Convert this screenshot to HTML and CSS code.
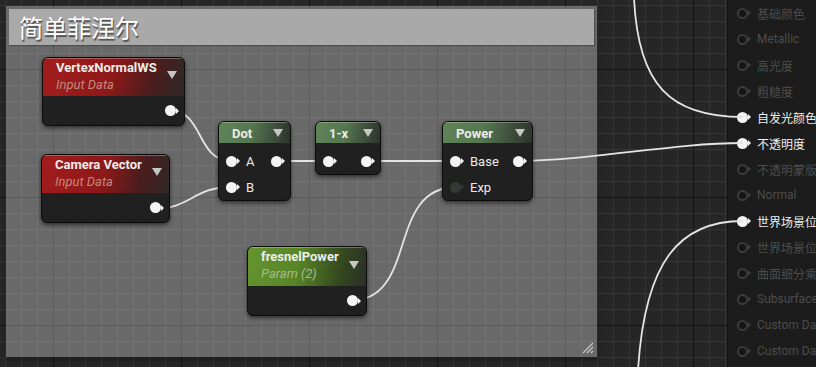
FILE: index.html
```html
<!DOCTYPE html>
<html lang="zh">
<head>
    <meta charset="UTF-8">
    <title>简单菲涅尔</title>
    <link rel="stylesheet" href="styles.css">
</head>
<body>

<div class="graph">

    <!-- comment box -->
    <div class="comment">
        <div class="comment-title">简单菲涅尔</div>
        <svg class="grip" width="12" height="12" viewBox="0 0 12 12">
            <path d="M1 11 L11 1 M5 11 L11 5 M9 11 L11 9" stroke="#c8c8c8" stroke-width="1.2"/>
        </svg>
    </div>

    <!-- material result node -->
    <div class="result">
        <div class="result-row"><span class="pin pin-off"></span><span>基础颜色</span></div>
        <div class="result-row"><span class="pin pin-off"></span><span>Metallic</span></div>
        <div class="result-row"><span class="pin pin-off"></span><span>高光度</span></div>
        <div class="result-row"><span class="pin pin-off"></span><span>粗糙度</span></div>
        <div class="result-row on"><span class="pin"></span><span>自发光颜色</span></div>
        <div class="result-row on"><span class="pin"></span><span>不透明度</span></div>
        <div class="result-row"><span class="pin pin-off"></span><span>不透明蒙版</span></div>
        <div class="result-row"><span class="pin pin-off"></span><span>Normal</span></div>
        <div class="result-row on"><span class="pin"></span><span>世界场景位置偏移</span></div>
        <div class="result-row"><span class="pin pin-off"></span><span>世界场景位移</span></div>
        <div class="result-row"><span class="pin pin-off"></span><span>曲面细分乘数</span></div>
        <div class="result-row"><span class="pin pin-off"></span><span>Subsurface Color</span></div>
        <div class="result-row"><span class="pin pin-off"></span><span>Custom Data 0</span></div>
        <div class="result-row"><span class="pin pin-off"></span><span>Custom Data 1</span></div>
    </div>

    <!-- wires -->
    <svg class="wires" width="816" height="367" viewBox="0 0 816 367">
        <g fill="none" stroke="#e4e4e4" stroke-width="1.8">
            <path d="M168 110 C 205 110, 195 161, 232 161"/>
            <path d="M152 209 C 192 209, 192 187, 232 187"/>
            <path d="M274 161 L 328 161"/>
            <path d="M364 161 L 457 161"/>
            <path d="M516 161 C 590 161, 670 143, 743 143"/>
            <path d="M349 301 C 420 301, 385 187, 457 187"/>
            <path d="M634 -2 C 638 85, 670 117, 743 117"/>
            <path d="M638 370 C 645 260, 680 221, 743 221"/>
        </g>
    </svg>

    <!-- nodes -->
    <div class="node n-vertex">
        <div class="node-head head-red tall">
            <div class="node-titles">
                <div class="node-title">VertexNormalWS</div>
                <div class="node-sub sub-red">Input Data</div>
            </div>
            <span class="caret"></span>
        </div>
        <div class="node-body single">
            <div class="pin-row"><span class="pin out"></span></div>
        </div>
    </div>

    <div class="node n-camera">
        <div class="node-head head-red tall">
            <div class="node-titles">
                <div class="node-title">Camera Vector</div>
                <div class="node-sub sub-red">Input Data</div>
            </div>
            <span class="caret"></span>
        </div>
        <div class="node-body single">
            <div class="pin-row"><span class="pin out"></span></div>
        </div>
    </div>

    <div class="node n-dot">
        <div class="node-head head-green">
            <div class="node-titles"><div class="node-title">Dot</div></div>
            <span class="caret"></span>
        </div>
        <div class="node-body">
            <div class="pin-row"><span class="pin"></span><span class="pin-label">A</span><span class="pin out"></span></div>
            <div class="pin-row"><span class="pin"></span><span class="pin-label">B</span></div>
        </div>
    </div>

    <div class="node n-oneminus">
        <div class="node-head head-green">
            <div class="node-titles"><div class="node-title">1-x</div></div>
            <span class="caret"></span>
        </div>
        <div class="node-body">
            <div class="pin-row"><span class="pin"></span><span class="pin out"></span></div>
        </div>
    </div>

    <div class="node n-power">
        <div class="node-head head-green">
            <div class="node-titles"><div class="node-title">Power</div></div>
            <span class="caret"></span>
        </div>
        <div class="node-body">
            <div class="pin-row"><span class="pin"></span><span class="pin-label">Base</span><span class="pin out"></span></div>
            <div class="pin-row"><span class="pin pin-dim"></span><span class="pin-label">Exp</span></div>
        </div>
    </div>

    <div class="node n-fresnel">
        <div class="node-head head-param tall">
            <div class="node-titles">
                <div class="node-title">fresnelPower</div>
                <div class="node-sub sub-green">Param (2)</div>
            </div>
            <span class="caret"></span>
        </div>
        <div class="node-body single">
            <div class="pin-row"><span class="pin out"></span></div>
        </div>
    </div>

</div>

</body>
</html>
```

FILE: styles.css
```css
body {
    margin: 0;
    background: #262626;
    font-family: Roboto, "Noto Sans CJK SC", sans-serif;
}
.graph {
    position: relative;
    width: 816px;
    height: 367px;
    overflow: hidden;
    background-color: #262626;
    background-image:
        linear-gradient(to right, #141414 1px, transparent 1px),
        linear-gradient(to bottom, #141414 1px, transparent 1px),
        linear-gradient(to right, #353535 1px, transparent 1px),
        linear-gradient(to bottom, #353535 1px, transparent 1px);
    background-size: 128px 128px, 128px 128px, 16px 16px, 16px 16px;
    background-position: 53px 69px, 53px 69px, 5px 5px, 5px 5px;
}

/* comment box */
.comment {
    position: absolute;
    left: 6px;
    top: 6px;
    width: 591px;
    height: 351px;
    padding: 3px;
    box-sizing: border-box;
    background: rgba(255, 255, 255, 0.31);
    box-shadow: 0 2px 4px rgba(0, 0, 0, 0.45);
}
.comment-title {
    height: 36px;
    padding-left: 10px;
    background: #a9a9a9;
    color: #ffffff;
    font-family: "Noto Sans CJK SC", sans-serif;
    font-size: 24px;
    line-height: 36px;
    text-shadow: 1px 2px 1px rgba(0, 0, 0, 0.55);
    box-shadow: 1px 1px 1px rgba(0, 0, 0, 0.25);
}
.grip {
    position: absolute;
    right: 3px;
    bottom: 3px;
}

/* result node */
.result {
    position: absolute;
    left: 727px;
    top: 0;
    width: 100px;
    height: 367px;
    background: #1b1c1b;
    border-left: 1px solid #141414;
    font-size: 12px;
    color: #4c4c4c;
}
.result-row {
    display: flex;
    align-items: center;
    gap: 6px;
    height: 26px;
    padding-left: 9px;
    white-space: nowrap;
}
.result-row.on {
    color: #eeeeee;
}
.result-row span:last-child {
    margin-left: 3px;
}

.wires {
    position: absolute;
    left: 0;
    top: 0;
}

/* pins */
.pin {
    position: relative;
    flex: none;
    width: 11px;
    height: 11px;
    border-radius: 50%;
    background: #f4f4f4;
}
.pin::after {
    content: "";
    position: absolute;
    left: 11px;
    top: 2.5px;
    border-left: 3px solid #f4f4f4;
    border-top: 3px solid transparent;
    border-bottom: 3px solid transparent;
}
.pin.out {
    margin-left: auto;
    margin-right: 3px;
}
.pin-dim {
    background: #363836;
}
.pin-dim::after {
    border-left-color: #363836;
}
.pin-off {
    box-sizing: border-box;
    background: #151515;
    border: 2px solid #3b3c3b;
}
.pin-off::after {
    left: 9px;
    top: 0.5px;
    border-left-color: #3b3c3b;
}

/* graph nodes */
.node {
    position: absolute;
    box-sizing: border-box;
    background: #1f201f;
    border: 1px solid #0b0b0b;
    border-radius: 6px;
    box-shadow: 0 2px 4px rgba(0, 0, 0, 0.55);
    overflow: hidden;
    font-size: 13px;
    color: #ececec;
}
.node-head {
    display: flex;
    align-items: flex-start;
    height: 21px;
    padding: 0 7px 0 13px;
    box-shadow: inset 0 1px 0 rgba(255, 255, 255, 0.28);
}
.node-head.tall {
    height: 38px;
}
.node-titles {
    flex: 1;
    padding-top: 4px;
    line-height: 15px;
    white-space: nowrap;
}
.tall .node-titles {
    padding-top: 2px;
}
.node-title {
    font-weight: 700;
}
.node-sub {
    margin-top: 2px;
    font-style: italic;
}
.sub-red {
    color: #c08a80;
}
.sub-green {
    color: #a6b98d;
}
.caret {
    align-self: center;
    width: 0;
    height: 0;
    border-left: 5px solid transparent;
    border-right: 5px solid transparent;
    border-top: 8px solid #c6c6c6;
}
.tall .caret {
    margin-bottom: 4px;
}
.head-red {
    background: linear-gradient(105deg, #a21d1d 0%, #8f1818 48%, #4c1d1d 76%, #2f2828 100%);
}
.head-green {
    background: linear-gradient(100deg, #608459 0%, #55764f 45%, #3b4a39 80%, #2d332c 100%);
}
.head-param {
    background: linear-gradient(100deg, #65932f 0%, #588627 42%, #34471f 78%, #2a2f26 100%);
}
.node-body {
    padding: 5px 0 0;
}
.node-body.single {
    padding: 0;
}
.pin-row {
    display: flex;
    align-items: center;
    gap: 6px;
    height: 26px;
    padding: 0 5px 0 7px;
}
.single .pin-row {
    height: 29px;
}
.pin-label {
    margin-left: 3px;
}

.n-vertex {
    left: 42px;
    top: 57px;
    width: 143px;
    height: 69px;
}
.n-camera {
    left: 41px;
    top: 154px;
    width: 129px;
    height: 69px;
}
.n-dot {
    left: 218px;
    top: 121px;
    width: 73px;
    height: 80px;
}
.n-oneminus {
    left: 315px;
    top: 121px;
    width: 66px;
    height: 54px;
}
.n-power {
    left: 442px;
    top: 121px;
    width: 91px;
    height: 80px;
}
.n-fresnel {
    left: 247px;
    top: 246px;
    width: 120px;
    height: 70px;
}
.n-fresnel .node-head {
    height: 39px;
}
```
